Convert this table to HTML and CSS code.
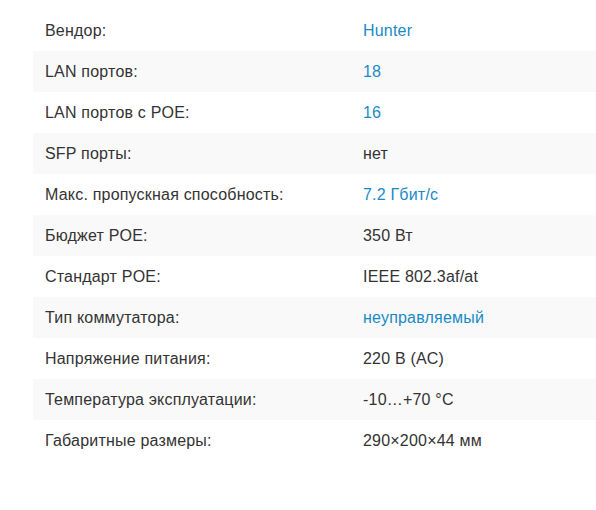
FILE: index.html
```html
<!DOCTYPE html>
<html lang="ru">
<head>
<meta charset="utf-8">
<link rel="stylesheet" href="styles.css">
</head>
<body>
<div class="page">
  <table class="specs">
    <tr><td class="k">Вендор:</td><td class="v link">Hunter</td></tr>
    <tr><td class="k">LAN портов:</td><td class="v link">18</td></tr>
    <tr><td class="k">LAN портов с POE:</td><td class="v link">16</td></tr>
    <tr><td class="k">SFP порты:</td><td class="v">нет</td></tr>
    <tr><td class="k">Макс. пропускная способность:</td><td class="v link">7.2 Гбит/с</td></tr>
    <tr><td class="k">Бюджет POE:</td><td class="v">350 Вт</td></tr>
    <tr><td class="k">Стандарт POE:</td><td class="v">IEEE 802.3af/at</td></tr>
    <tr><td class="k">Тип коммутатора:</td><td class="v link">неуправляемый</td></tr>
    <tr><td class="k">Напряжение питания:</td><td class="v">220 В (AC)</td></tr>
    <tr><td class="k">Температура эксплуатации:</td><td class="v">-10…+70 °C</td></tr>
    <tr><td class="k">Габаритные размеры:</td><td class="v">290×200×44 мм</td></tr>
  </table>
</div>
</body>
</html>
```
FILE: styles.css
```css
html, body {
  margin: 0;
  padding: 0;
  background: #fff;
}
.page {
  padding: 10px 0 0 33px;
  font-family: "Liberation Sans", Arial, sans-serif;
  font-size: 16px;
  letter-spacing: 0.2px;
  color: #333;
}
.specs {
  border-collapse: collapse;
  table-layout: fixed;
  width: 563px;
}
.specs tr {
  height: 41px;
}
.specs tr:nth-child(even) {
  background: #f9f9f9;
}
.specs td {
  padding: 0 12px;
  vertical-align: middle;
  line-height: 20px;
}
.specs .k {
  width: 294px;
}
.link {
  color: #1a8ac6;
}
```
